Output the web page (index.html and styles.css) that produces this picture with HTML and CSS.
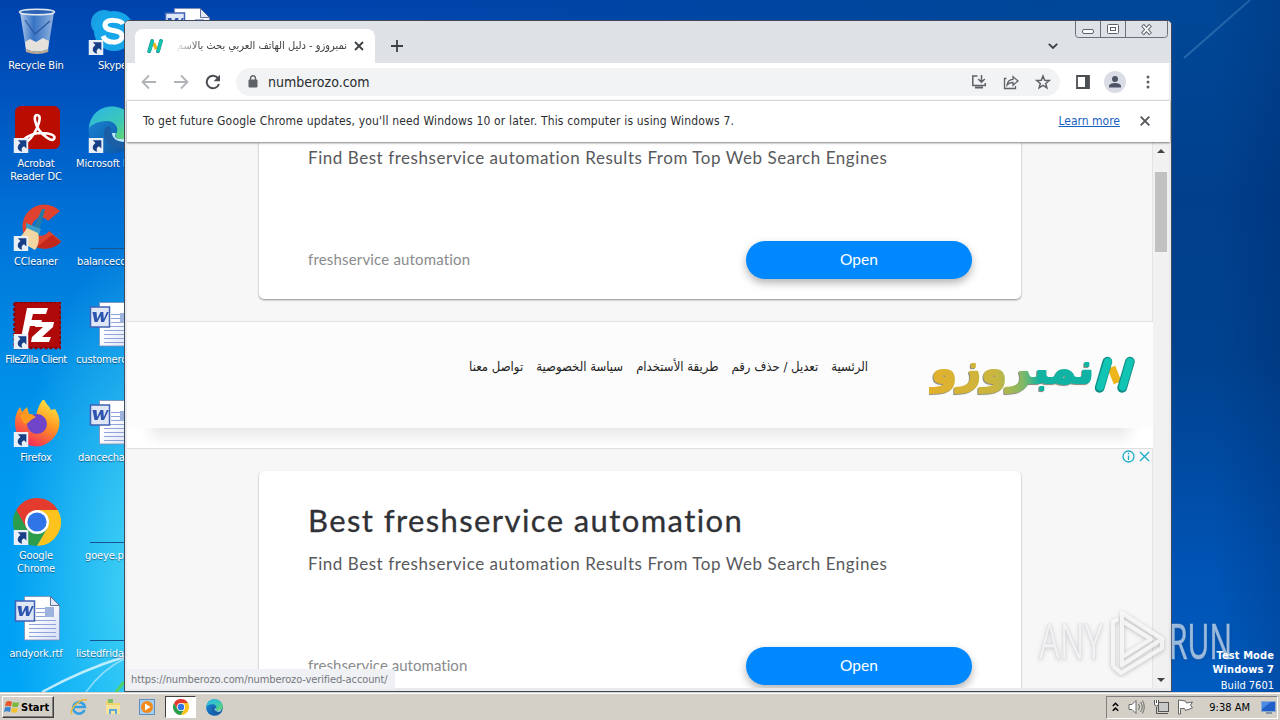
FILE: index.html
```html
<!DOCTYPE html>
<html lang="en">
<head>
<meta charset="utf-8">
<title>Desktop</title>
<link rel="stylesheet" href="styles.css">
</head>
<body>
<svg class="defs" width="0" height="0">
  <defs>
    <linearGradient id="edgeA" x1="0" y1="0" x2="1" y2="1"><stop offset="0" stop-color="#2bb5e8"/><stop offset=".55" stop-color="#3cc8b8"/><stop offset="1" stop-color="#6fdc5c"/></linearGradient>
    <linearGradient id="edgeB" x1="0" y1="0" x2="1" y2="1"><stop offset="0" stop-color="#1a8ad8"/><stop offset="1" stop-color="#0c4f9e"/></linearGradient>
    <linearGradient id="fox" x1=".8" y1="0" x2=".3" y2="1"><stop offset="0" stop-color="#fff04a"/><stop offset=".45" stop-color="#ff9a22"/><stop offset="1" stop-color="#f2265c"/></linearGradient>
    <linearGradient id="paper" x1="0" y1="0" x2="1" y2="1"><stop offset=".4" stop-color="#fff"/><stop offset="1" stop-color="#d5dcf4"/></linearGradient>
    <linearGradient id="bin" x1="0" y1="0" x2="1" y2="0"><stop offset="0" stop-color="#d4e4f5" stop-opacity=".85"/><stop offset=".4" stop-color="#4f86cc" stop-opacity=".7"/><stop offset="1" stop-color="#b9d0ea" stop-opacity=".8"/></linearGradient>
    <linearGradient id="brand" gradientUnits="userSpaceOnUse" x1="0" y1="10" x2="165" y2="-6"><stop offset="0" stop-color="#e3b02c"/><stop offset=".4" stop-color="#c8b640"/><stop offset=".56" stop-color="#7fb868"/><stop offset=".66" stop-color="#12b3a2"/><stop offset="1" stop-color="#0fb2a4"/></linearGradient>
    <symbol id="shortcut" viewBox="0 0 14 14"><rect width="14" height="14" fill="#e9eff7"/><path d="M4 2.200h8v7.600L9.800 7.600C7.600 8.800 7 10.500 8.200 12.800 3.500 12 2.400 7.700 6.500 4.700z" fill="#173f86"/></symbol>
    <symbol id="word" viewBox="0 0 48 48">
      <path d="M11.500 .5h26l9 9v34.500h-35z" fill="url(#paper)" stroke="#7b8bb8" stroke-width=".8"/><path d="M37.500 .5v9h9z" fill="#e2e8f8" stroke="#44527a" stroke-width=".8"/>
      <path d="M23 12.500h9M23 16.500h9M23 20.500h9M16 24.500h27M16 28.500h27M16 32.500h27M16 36.500h27M16 40.500h27" stroke="#8ea4da"/>
      <rect x="32" y="11" width="9" height="10" fill="#9db3de"/>
      <rect x="2.500" y="5" width="19" height="20" fill="#dfe7f7" stroke="#3f62b4" stroke-width="1.500"/><path d="M4.500 10h4l.6 7 3.400-7h2.800l.5 7 3-7h2L16 20h-3l-.5-6-3 6H6.500z" fill="#2d54ae"/>
    </symbol>
    <symbol id="chrome" viewBox="0 0 48 48">
      <path d="M3.200 12A24 24 0 0 1 44.800 12H24z" fill="#e33b2e"/><path d="M3.200 12A24 24 0 0 0 24 48L34.400 30 24 24 13.600 30z" fill="#2c9e4b"/><path d="M44.800 12A24 24 0 0 1 24 48l10.400-18L24 12z" fill="#fcc31e"/><path d="M3.200 12 13.600 30 24 24V12z" fill="#e33b2e"/>
      <circle cx="24" cy="24" r="12" fill="#fff"/><circle cx="24" cy="24" r="9.600" fill="#2f75e8"/>
    </symbol>
    <symbol id="edge" viewBox="0 0 48 48">
      <circle cx="24" cy="24" r="23.500" fill="url(#edgeB)"/><path d="M.8 23C2 8 12 .5 24 .5S48 10 47.500 21c-.4 8-7 12-14 12-6 0-7-3-5-6 3-5-2-12-9-12C10 15 2 19 .8 23z" fill="url(#edgeA)"/><path d="M17 23c-4 9 4 19 14 19 6 0 10-2 14-6-4 2-9 2-14 0-7-3-9-8-8-13-1-4-4-4-6 0z" fill="#1c5ea5"/><path d="M28 27c-2 3-1 6 5 6 5 0 9-2 11-4-1 4-4 7-7 7-8 0-13-4-13-9z" fill="#bfe9f2"/>
    </symbol>
    <symbol id="nmark" viewBox="0 0 40 36"><path d="M17 11 23 26" stroke="#edb51b" stroke-width="8"/><path d="M5.500 31 13 5.500M27.500 31 35 5.500" stroke="#0f8d86" stroke-width="9.500" stroke-linecap="round"/><path d="M6 30 13.500 5.500M28 30 35 5.500" stroke="#12c4b3" stroke-width="7.500" stroke-linecap="round"/></symbol>
  </defs>
</svg>

<div class="desktop">
  <svg class="wallpaper" width="1280" height="692" viewBox="0 0 1280 692" fill="none">
    <path d="M42 692Q82 670 124 657" stroke="#d8f4ff" stroke-width="2.500" opacity=".85"/><path d="M86 692Q103 669 124 659" stroke="#b9eaff" stroke-width="1.500" opacity=".7"/><path d="M116 692 124 682" stroke="#4fd46c" stroke-width="3"/>
  </svg>

  <div class="icons">
    <div class="column">
      <div class="item"><svg viewBox="0 0 48 48"><path d="M7 4h34L35 42q-11 5-22 0z" fill="url(#bin)"/><ellipse cx="24" cy="4" rx="17.500" ry="2.800" fill="#2b62b4" stroke="#e3e9ef" stroke-width="1.500"/><path d="M12 34l5-3 6 3 7-4 6 3-1 8q-11 5-22 0z" fill="#e5e2dc"/><path d="M12 12l10 14 15-13" stroke="#2d579f" stroke-width="1.200" fill="none"/><path d="M12.500 41q11.500 5 23 0l-.4 3q-11 4-22 0z" fill="#bba992"/></svg><span>Recycle Bin</span></div>
      <div class="item"><svg viewBox="0 0 48 48"><rect x="2" y="0" width="45" height="43" rx="6" fill="#b80d00"/><path d="M24 9c4 0 3 6 0 13S15 37 11 36s6-9 17-9 15 3 13 6-11-3-15-9-6-15-2-15z" fill="none" stroke="#fff" stroke-width="2.600"/><use href="#shortcut" x=".5" y="32" width="15" height="15"/></svg><span>Acrobat<br>Reader DC</span></div>
      <div class="item"><svg viewBox="0 0 48 48"><path d="M47 7A22 22 0 1 0 48 37L36 27A9 9 0 1 1 35 17z" fill="#df4330"/><path d="M39 31l9 7A22 22 0 0 1 24 43z" fill="#c2281c"/><path d="M29 5h3l-6 23-6-3z" fill="#237ba8"/><path d="M13 19l15 6-2 6L13 27z" fill="#3c9bc7"/><path d="M14 24l11 5c2 7 0 13-3 17L3 35c5-2 8-6 11-11z" fill="#f2d7a2"/><use href="#shortcut" x=".5" y="32" width="15" height="15"/></svg><span>CCleaner</span></div>
      <div class="item"><svg viewBox="0 0 48 48"><rect x="1.500" y="0" width="46" height="46" fill="#b0090a" stroke="#8b0000" stroke-width="2.500" stroke-dasharray="3 2"/><path d="M14 6h21l-2 6H20l-1.500 6H29l-2 6H17l-3 12H8zM23 20h18l-1 5-11 10h9l-2 5H18l1-5 11-10h-8z" fill="#fff"/><use href="#shortcut" x=".5" y="32" width="15" height="15"/></svg><span class="narrow">FileZilla Client</span></div>
      <div class="item"><svg viewBox="0 0 48 48"><path d="M2 22C2 16 4 11 7 7l2 5 5-5 2 7 7 1c2-7 4-12 8-17 1 6 5 7 7 12l4-1c6 8 6 19 0 27S27 49 16 45 2 32 2 22z" fill="url(#fox)"/><circle cx="24" cy="24" r="10" fill="#7044c8"/><path d="M7 15c8-3 13 0 16 2l-5 3c-3 4-7 5-8 2z" fill="#ff9a1e"/><use href="#shortcut" x=".5" y="32" width="15" height="15"/></svg><span>Firefox</span></div>
      <div class="item"><svg viewBox="0 0 48 48"><use href="#chrome" width="48" height="48"/><use href="#shortcut" x=".5" y="32" width="15" height="15"/></svg><span>Google<br>Chrome</span></div>
      <div class="item"><svg viewBox="0 0 48 48"><use href="#word"/></svg><span>andyork.rtf</span></div>
    </div>
    <div class="column second">
      <div class="item"><svg viewBox="0 0 48 48"><circle cx="16" cy="15" r="13" fill="#1aa0e4"/><circle cx="26" cy="23" r="20" fill="#16a5e8"/><path d="M35 16c-2-4-17-6-18 1 0 8 18 3 17 12-1 7-16 7-19-1" fill="none" stroke="#fff" stroke-width="5"/><use href="#shortcut" x=".5" y="32" width="15" height="15"/></svg><span>Skype</span></div>
      <div class="item"><svg viewBox="0 0 48 48"><use href="#edge"/><use href="#shortcut" x=".5" y="32" width="15" height="15"/></svg><span class="from-left">Microsoft Edge</span></div>
      <div class="item"><svg viewBox="0 0 48 48"><path d="M2 44.500h46" stroke="#17558f"/></svg><span class="from-left pad1">balancecc.rtf</span></div>
      <div class="item"><svg viewBox="0 0 48 48"><use href="#word"/></svg><span class="from-left">customerc.rtf</span></div>
      <div class="item"><svg viewBox="0 0 48 48"><use href="#word"/></svg><span class="from-left pad2">dancecha.rtf</span></div>
      <div class="item"><svg viewBox="0 0 48 48"><path d="M2 44.500h46" stroke="#17558f"/></svg><span class="from-left pad3">goeye.png</span></div>
      <div class="item"><svg viewBox="0 0 48 48"><path d="M2 44.500h46" stroke="#17558f"/></svg><span class="from-left">listedfriday.rtf</span></div>
    </div>
    <div class="column third"><div class="item"><svg viewBox="0 0 48 48"><use href="#word"/></svg></div></div>
  </div>

  <svg class="beam" width="108" height="120" viewBox="0 0 108 120" fill="none"><path d="M12 58 78 0" stroke="#6aa3d8" stroke-width="2" opacity=".35"/></svg>
  <div class="build"><b>Test Mode</b><b>Windows 7</b><span>Build 7601</span></div>

  <div class="window">
    <div class="tabstrip">
      <div class="tab">
        <svg class="favicon" viewBox="0 0 40 36"><use href="#nmark"/></svg>
        <div class="tab-title" dir="rtl"><bdi>نمبروزو - دليل الهاتف العربي بحث بالاسم</bdi></div>
        <svg class="tab-x" width="10" height="10" viewBox="0 0 10 10"><path d="M1 1l8 8M9 1 1 9" stroke="#3c4043" stroke-width="1.800"/></svg>
      </div>
      <svg class="newtab" width="12" height="12" viewBox="0 0 12 12"><path d="M6 0v12M0 6h12" stroke="#3c4043" stroke-width="1.800"/></svg>
      <svg class="tabsearch" width="10" height="6" viewBox="0 0 10 6"><path d="M.8.8 5 5 9.200.8" stroke="#3c4043" stroke-width="1.800" fill="none"/></svg>
      <svg class="caption" width="94" height="18" viewBox="0 0 94 18" fill="none"><path d="M.5 0v13.500q0 3 3 3h86q3 0 3-3V0M25.500 0v16M50.500 0v16" stroke="#6c7078"/><rect x="7.500" y="8.500" width="11" height="4" rx="1.500" fill="#fff" stroke="#5b626c"/><rect x="32.500" y="3.500" width="11" height="9" rx="1" fill="#fff" stroke="#5b626c"/><rect x="35.500" y="6.500" width="5" height="3" stroke="#5b626c"/><path d="M67.500 4l8 9M75.500 4l-8 9" stroke="#5b626c" stroke-width="3.800"/><path d="M68 4.600l7 7.800M75 4.600l-7 7.800" stroke="#fff" stroke-width="1.800"/></svg>
    </div>
    <div class="toolbar">
      <svg width="16" height="16" viewBox="0 0 16 16"><path d="M15 8H2M8 1.500 1.500 8 8 14.500" stroke="#b0b3b7" stroke-width="1.800" fill="none"/></svg>
      <svg width="16" height="16" viewBox="0 0 16 16"><path d="M1 8h13M8 1.500 14.500 8 8 14.500" stroke="#b0b3b7" stroke-width="1.800" fill="none"/></svg>
      <svg width="16" height="16" viewBox="0 0 16 16"><path d="M13.200 4.400A6.300 6.300 0 1 0 14 10" stroke="#4a4d51" stroke-width="2" fill="none"/><path d="M15 .8v6.400H8.600z" fill="#4a4d51"/></svg>
      <div class="omnibox">
        <svg width="10" height="13" viewBox="0 0 10 13"><rect x=".5" y="4.500" width="9" height="8" rx="1" fill="#5f6368"/><path d="M2.500 5V3.300a2.500 2.500 0 0 1 5 0V5" stroke="#5f6368" stroke-width="1.400" fill="none"/></svg>
        <span class="url">numberozo.com</span>
        <svg width="16" height="16" viewBox="0 0 16 16" fill="none" stroke="#5f6368" stroke-width="1.500"><path d="M6.500 2H1.800v9.500h12.500V9M10.500 1v7M7.200 5l3.300 3.300L13.800 5"/><path d="M4 13.500h8" stroke-width="2"/></svg>
        <svg width="16" height="16" viewBox="0 0 16 16" fill="none" stroke="#5f6368" stroke-width="1.300"><path d="M3.500 4.500h-2v10h11V12M4 11c.5-4 2.500-5.500 6-5.700V2.600L15 7l-5 4.300V8.500C7.500 8.500 5.500 9 4 11z"/></svg>
        <svg width="16" height="16" viewBox="0 0 16 16" fill="none" stroke="#5f6368" stroke-width="1.500"><path d="M8 2l1.700 4.200 4.500.3-3.500 2.900 1.200 4.400L8 11.400l-3.900 2.400 1.200-4.400L1.800 6.500l4.500-.3z"/></svg>
      </div>
      <svg class="panel" width="14" height="14" viewBox="0 0 14 14"><path d="M1 1h12v12H1z" fill="none" stroke="#4c4f54" stroke-width="1.800"/><path d="M9 1h4v12H9z" fill="#4c4f54"/></svg>
      <svg class="avatar" width="22" height="22" viewBox="0 0 22 22"><circle cx="11" cy="11" r="11" fill="#dadde5"/><circle cx="11" cy="8" r="3" fill="#4d5566"/><path d="M5 16.500v-1.500c0-2 3.500-3 6-3s6 1 6 3v1.500z" fill="#4d5566"/></svg>
      <svg class="menu" width="4" height="14" viewBox="0 0 4 14" fill="#5f6368"><circle cx="2" cy="2" r="1.500"/><circle cx="2" cy="7" r="1.500"/><circle cx="2" cy="12" r="1.500"/></svg>
    </div>
    <div class="infobar">
      <span class="notice">To get future Google Chrome updates, you'll need Windows 10 or later. This computer is using Windows 7.</span>
      <span class="learn">Learn more</span>
      <svg width="10" height="10" viewBox="0 0 10 10"><path d="M.7.7l8.600 8.600M9.300.7.7 9.300" stroke="#55585c" stroke-width="1.900"/></svg>
    </div>
    <div class="view">
      <div class="page">
        <section class="ad ad-top">
          <div class="card">
            <p>Find Best freshservice automation Results From Top Web Search Engines</p>
            <div class="card-foot"><span>freshservice automation</span><a class="open">Open</a></div>
          </div>
        </section>
        <header class="site">
          <nav dir="rtl"><a>الرئسية</a><a>تعديل / حذف رقم</a><a>طريقة الأستخدام</a><a>سياسة الخصوصية</a><a>تواصل معنا</a></nav>
          <svg class="logo" width="208" height="54" viewBox="0 0 208 54">
            <text class="logo-text" transform="translate(2 32) scale(1 1.080)" x="0" y="0" textLength="163" lengthAdjust="spacingAndGlyphs" fill="url(#brand)" stroke="url(#brand)">نمبروزو</text>
            <use href="#nmark" x="165" y="5" width="41" height="37"/>
          </svg>
        </header>
        <section class="ad">
          <svg class="adchoice" width="28" height="14" viewBox="0 0 28 14" fill="none" stroke="#19a9c9" stroke-width="1.300"><circle cx="6.500" cy="6.500" r="5.500"/><path d="M6.500 5.500V10M6.500 2.700v1.500M18 2l9 9M27 2l-9 9"/></svg>
          <div class="card">
            <h2>Best freshservice automation</h2>
            <p>Find Best freshservice automation Results From Top Web Search Engines</p>
            <div class="card-foot"><span class="tight">freshservice automation</span><a class="open">Open</a></div>
          </div>
        </section>
      </div>
      <div class="scrollbar"><i class="up"></i><i class="thumb"></i><i class="down"></i></div>
      <div class="status">https://numberozo.com/numberozo-verified-account/</div>
    </div>
  </div>

  <svg class="watermark" width="200" height="72" viewBox="0 0 200 72">
    <g class="wm-text"><text x="4" y="53" textLength="64" lengthAdjust="spacingAndGlyphs">ANY</text><text x="134" y="53" textLength="63" lengthAdjust="spacingAndGlyphs">RUN</text></g>
    <g class="wm-mark"><path d="M78 60V16l5-3M87 50V7l40 26-40 26v-8l29-18-29-18M78 60l8 7 41-25v-9"/></g>
  </svg>
</div>

<div class="taskbar">
  <div class="start"><svg width="16" height="16" viewBox="0 0 16 16"><path d="M2 3q3-2 6 0L7 7.500Q4 6 1 7.500z" fill="#e8562a"/><path d="M9 3q3 1.500 6 0l-1 4.500q-3 1.500-6 0z" fill="#79b93c"/><path d="M1 8.500q3-1.500 6 0L6 13q-3-1.500-6 0z" fill="#3b85d0"/><path d="M8 8.800q3 1.500 6 0L13 13q-3 1.500-6 0z" fill="#f5c22c"/></svg>Start</div>
  <div class="quick"><svg width="18" height="18" viewBox="0 0 18 18" fill="none"><path d="M14.500 12A5.800 5.800 0 1 1 14.800 9H4" stroke="#38a0e0" stroke-width="2.600"/><path d="M2 16C-1 12 9 0 17 2" stroke="#e6b93a" stroke-width="1.500"/></svg></div>
  <div class="quick"><svg width="18" height="18" viewBox="0 0 18 18"><path d="M2 3h6l1 2h7v11H2z" fill="#f0d46c"/><path d="M4 1h5v4H4z" fill="#7fbf6a"/><path d="M2 7h14v9H2z" fill="#f7e49c"/><path d="M5 16v-5h8v5h-2v-3H7v3z" fill="#5fa9dc"/></svg></div>
  <div class="quick"><svg width="18" height="18" viewBox="0 0 18 18"><rect x="1.500" y="1.500" width="15" height="15" fill="#a9cdec" stroke="#5d8fc2"/><circle cx="9" cy="9" r="6" fill="#f08a1c"/><path d="M7 5.500 12.500 9 7 12.500z" fill="#fff"/></svg></div>
  <div class="quick active"><svg width="16" height="16"><use href="#chrome" width="16" height="16"/></svg></div>
  <div class="quick"><svg width="17" height="17"><use href="#edge" width="17" height="17"/></svg></div>
  <div class="tray">
    <svg class="t1" width="7" height="10" viewBox="0 0 7 10" fill="none" stroke="#000" stroke-width="1.500"><path d="M.8 4 3.500 1.300 6.200 4M.8 8.800 3.500 6.100 6.200 8.800"/></svg>
    <svg class="t2" width="17" height="16" viewBox="0 0 17 16" fill="none" stroke="#6a6a6a"><path d="M1 5.500h3l4-4v13l-4-4H1z" fill="#fff"/><path d="M10.500 5q2 3 0 6M12.500 3q3.500 5 0 10M14.500 1.500q3.500 6.500 0 13"/></svg>
    <svg class="t3" width="17" height="16" viewBox="0 0 17 16" fill="none" stroke="#555"><rect x="5.500" y="3.500" width="10" height="9" fill="#c9c9c9"/><path d="M7 14.500h8M3.500 8v6.500h5"/><path d="M1.500 1v4q0 2 2 2t2-2V1M3.500 1v3" fill="#fff"/></svg>
    <svg class="t4" width="17" height="16" viewBox="0 0 17 16" fill="#fff" stroke="#666"><path d="M1.500 1v14h2V9.500h4l1 2L15.500 9l-2-3 2-3-6 1-1-2z"/></svg>
    <span class="clock">9:38 AM</span>
    <svg class="t5" width="15" height="13" viewBox="0 0 15 13"><rect x=".5" y=".5" width="14" height="10" fill="#1f5fc8" stroke="#8da9cf"/><path d="M1 1h9L1 8z" fill="#4b8be4"/><path d="M5 12h6" stroke="#6c7f99" stroke-width="1.500"/></svg>
  </div>
</div>
</body>
</html>
```
FILE: styles.css
```css
* { box-sizing: border-box; }
body { margin: 0; width: 1280px; height: 720px; overflow: hidden; font-family: "DejaVu Sans Condensed", "DejaVu Sans", sans-serif; font-stretch: condensed; }
.defs { position: absolute; }
svg { flex: none; display: block; }

.desktop {
  position: relative; width: 1280px; height: 692px; overflow: hidden;
  background:
    radial-gradient(ellipse 150px 350px at 160px 580px, rgba(90,230,245,.85), rgba(60,210,250,0) 100%),
    linear-gradient(to right, transparent 300px, #004797 1100px),
    linear-gradient(#0043ad 0, #0052bd 90px, #0070d6 210px, #008ce6 360px, #0099f0 480px, #00a4f6 692px);
}
.desktop::before { content: ""; position: absolute; left: 1172px; right: 0; top: 20px; bottom: 0; background: linear-gradient(to bottom, #004797, #003f8c 180px, #00428f 340px, #0053b3 540px, #005cc0 672px); }
.desktop::after { content: ""; position: absolute; left: 1172px; right: 0; top: 0; bottom: 0; background: linear-gradient(to right, transparent 40%, rgba(0,32,90,.22)); }
.wallpaper { position: absolute; left: 0; top: 0; }
.beam { position: absolute; right: 0; top: 0; }

.icons { position: absolute; left: 0; top: 8px; display: flex; }
.column { width: 75px; }
.column:first-child .item { padding-right: 3px; }
.item { height: 98px; display: flex; flex-direction: column; align-items: center; color: #fff; font-size: 11px; line-height: 13px; letter-spacing: -.15px; text-align: center; white-space: nowrap; text-shadow: 0 1px 1px rgba(0,20,60,.55); }
.item svg { width: 48px; height: 48px; margin-bottom: 3px; margin-left: 2px; }
.second .item svg, .third .item svg { margin-left: -2px; }
.item .narrow { letter-spacing: -.5px; }
.item .from-left { align-self: flex-start; padding-left: 1px; }
.item .pad1 { padding-left: 2px; }
.item .pad2 { padding-left: 3px; }
.item .pad3 { padding-left: 10px; }

.build { position: absolute; right: 6px; bottom: -1px; z-index: 4; display: flex; flex-direction: column; align-items: flex-end; color: #fff; font-size: 11px; line-height: 14px; }
.build b { letter-spacing: .1px; }
.build b + b { margin-bottom: 2px; }

.window { position: absolute; left: 124px; top: 20px; z-index: 1; width: 1048px; height: 672px; border: 1px solid #414b5c; border-radius: 5px 5px 0 0; padding: 0 2px 3px; background: #e8eaed; display: flex; flex-direction: column; overflow: hidden; }

.tabstrip { position: relative; height: 42px; flex: none; margin: 0 -2px; padding: 8px 2px 0 10px; background: #dee1e6; display: flex; align-items: flex-start; }
.tab { width: 240px; height: 34px; background: #fff; border-radius: 8px 8px 0 0; display: flex; align-items: center; padding: 0 11px 0 12px; }
.favicon { width: 16px; height: 16px; margin-right: 11px; }
.tab-title { flex: 1; overflow: hidden; white-space: nowrap; font-size: 11px; line-height: 18px; color: #3c4043; -webkit-mask-image: linear-gradient(to right, transparent, #000 28px); mask-image: linear-gradient(to right, transparent, #000 28px); }
.tab-x { margin-left: 7px; }
.newtab { margin: 11px 0 0 16px; }
.tabsearch { margin: 14px 0 0 645px; }
.caption { position: absolute; right: 2px; top: 0; }

.toolbar { height: 37px; flex: none; background: #fff; display: flex; align-items: center; padding: 0 19px 0 14px; }
.toolbar > svg { margin-right: 16px; }
.omnibox { width: 825px; height: 28px; margin-left: -1px; margin-right: 16px; border-radius: 14px; background: #f1f3f4; display: flex; align-items: center; padding: 0 9px 0 12px; gap: 16px; }
.url { flex: 1; margin-left: -6px; font-size: 14px; color: #2a2c30; }
.toolbar .panel { margin-right: 14px; }
.toolbar .avatar { margin-right: 20px; }
.toolbar .menu { margin: 0; }

.infobar { position: relative; z-index: 2; height: 42px; flex: none; margin: 0 -1px 0 0; border-top: 1px solid #d5d7da; background: #fff; box-shadow: 0 1px 2px rgba(0,0,0,.5); display: flex; align-items: center; padding: 0 20px 2px 16px; font-size: 12px; color: #2d2f33; }
.notice { flex: 1; white-space: nowrap; letter-spacing: .17px; }
.learn { color: #1a5fc4; text-decoration: underline; margin-right: 20px; white-space: nowrap; }
.infobar svg { margin-top: 1px; }

.view { position: relative; flex: 1; min-height: 0; display: flex; background: #fff; }
.page { width: 1026px; height: 546px; overflow: hidden; display: flex; flex-direction: column; font-family: Lato, sans-serif; font-stretch: normal; }
.ad { position: relative; height: 278px; flex: none; background: #f7f7f7; border-right: 1px solid #e3e3e3; padding-top: 22px; }
.ad-top { height: 179px; padding-top: 0; }
.card { width: 762px; height: 234px; margin-left: 132px; border-radius: 5px; background: #fff; box-shadow: 0 1px 2px rgba(0,0,0,.42); padding: 29px 49px 20px; display: flex; flex-direction: column; }
.ad-top .card { height: 157px; padding-top: 4px; border-radius: 0 0 5px 5px; }
.card h2 { margin: 0 0 12px; font-size: 31px; line-height: 40px; font-weight: 400; color: #303236; letter-spacing: 1.4px; white-space: nowrap; -webkit-text-stroke: .3px #303236; }
.card p { margin: 0; font-size: 17px; line-height: 24px; color: #58595c; letter-spacing: .55px; white-space: nowrap; }
.card-foot { margin-top: auto; display: flex; justify-content: space-between; align-items: center; font-size: 15px; color: #8a8b8d; letter-spacing: .17px; }
.card-foot span { padding-bottom: 3px; }
.card-foot .tight { letter-spacing: .04px; }
.open { width: 226px; height: 38px; border-radius: 19px; background: #0088ff; color: #fff; font-size: 15.5px; line-height: 37px; letter-spacing: 0; text-align: center; box-shadow: 0 4px 8px rgba(0,0,0,.3); }
.adchoice { position: absolute; right: 2px; top: 1px; }

.site { position: relative; height: 128px; flex: none; border-top: 1px solid #e0e0e0; border-bottom: 1px solid #e0e0e0; background: linear-gradient(#fcfcfc 106px, #fff 106px); display: flex; justify-content: flex-end; align-items: flex-start; padding-right: 16px; }
.site::after { content: ""; position: absolute; left: 14px; right: 14px; top: 106px; height: 19px; background: linear-gradient(#eaeaea, #fff); -webkit-mask-image: linear-gradient(to right, transparent, #000 20px, #000 980px, transparent); mask-image: linear-gradient(to right, transparent, #000 20px, #000 980px, transparent); }
.site nav { display: flex; gap: 13px; margin: 36px 61px 0 0; font-family: "DejaVu Sans Condensed", "DejaVu Sans", sans-serif; font-stretch: condensed; font-size: 13px; line-height: 18px; color: #1e1e1e; white-space: nowrap; }
.logo { margin-top: 29px; }
.logo-text { font: bold 38px "DejaVu Sans", sans-serif; stroke-width: 1.8; stroke-linejoin: round; direction: ltr; filter: drop-shadow(-1px 1px 0 rgba(70,70,50,.6)); }

.scrollbar { width: 16px; height: 546px; background: #f1f1f1; display: flex; flex-direction: column; align-items: center; padding: 7px 0 6px; }
.up, .down { border: 4px solid transparent; }
.up { border-top: 0; border-bottom: 4px solid #404347; }
.down { border-bottom: 0; border-top: 4px solid #404347; margin-top: auto; }
.thumb { width: 12px; height: 80px; margin-top: 19px; background: #c1c1c1; }
.status { position: absolute; left: 0; bottom: -1px; width: 268px; height: 20px; background: #eff1f4; border-radius: 0 4px 0 0; padding-left: 4px; font-size: 11px; line-height: 21px; letter-spacing: -.1px; color: #75787d; white-space: nowrap; }

.watermark { position: absolute; left: 1035px; top: 606px; z-index: 3; }
.wm-text { font: 50px "Open Sans", sans-serif; fill: rgba(255,255,255,.6); stroke: rgba(200,205,215,.4); stroke-width: 1.2; filter: drop-shadow(0 1px 2px rgba(0,0,0,.22)); }
.wm-mark { fill: none; stroke: rgba(255,255,255,.75); stroke-width: 4; stroke-linejoin: round; filter: drop-shadow(0 1px 2px rgba(0,0,0,.3)); }

.taskbar { height: 28px; background: #d4d0c8; border-top: 1px solid #d4d0c8; box-shadow: inset 0 1px #fff; display: flex; align-items: center; padding-left: 2px; color: #000; }
.start { width: 52px; height: 22px; margin: 1px 9px 0 0; border: 1px solid; border-color: #fff #404040 #404040 #fff; box-shadow: inset -1px -1px #808080; display: flex; align-items: center; padding-left: 1px; gap: 1px; font-size: 11px; font-weight: bold; }
.quick { width: 31px; height: 22px; margin: 1px 3px 0 0; display: flex; align-items: center; justify-content: center; }
.active { background: #fff; border: 1px solid; border-color: #404040 #fff #fff #404040; }
.tray { width: 172px; height: 23px; margin: 1px 2px 0 auto; border: 1px solid; border-color: #808080 #fff #fff #808080; display: flex; align-items: center; padding: 0 1px 0 5px; font-size: 11px; }
.t2 { margin-left: 9px; }
.t3 { margin-left: 8px; }
.t4 { margin-left: 7px; }
.clock { margin-left: auto; white-space: nowrap; }
.t5 { margin-left: 11px; }
```
